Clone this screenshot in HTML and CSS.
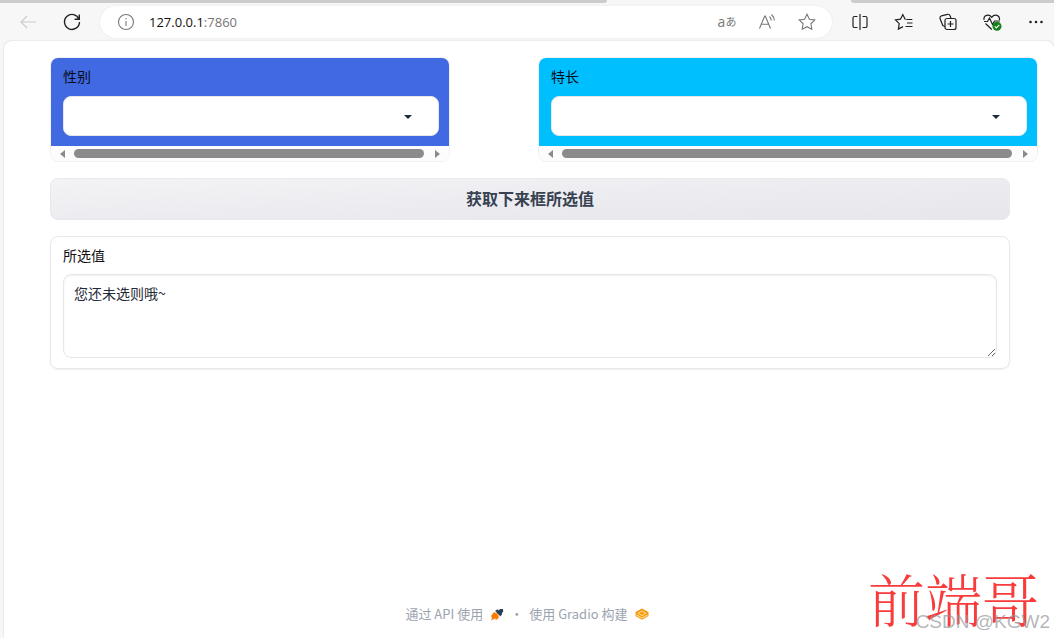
FILE: index.html
```html
<!DOCTYPE html>
<html lang="zh-CN">
<head>
<meta charset="utf-8">
<meta name="viewport" content="width=device-width, initial-scale=1">
<title>Gradio</title>
<link rel="stylesheet" href="styles.css">
</head>
<body>
<header class="browser">
  <div class="tabs"><div class="tab-left"></div><div class="tab-right"></div></div>
  <div class="toolbar">
    <button class="tool disabled" aria-label="后退"><svg viewBox="0 0 20 20"><path d="M18 10H3M9 4L3 10l6 6"/></svg></button>
    <button class="tool strong" aria-label="刷新"><svg viewBox="0 0 20 20"><path d="M17 7.200A7.500 7.500 0 1 0 17.500 10M17.300 2.500v4.700h-4.700"/></svg></button>
    <div class="address">
      <svg class="info" viewBox="0 0 20 20"><circle cx="10" cy="10" r="7.500"/><path d="M10 9v5M10 6v1.200"/></svg>
      <span class="url">127.0.0.1<span class="port">:7860</span></span>
      <button class="tool muted translate" aria-label="翻译">a<small>あ</small></button>
      <button class="tool muted" aria-label="大声朗读"><svg viewBox="0 0 20 20"><path d="M2.500 16.500L7.700 4h.600l5.200 12.500M4.300 12.300h7.400M12.500 4.500q1.600 1.500 1.700 4M14.500 2.500q2.800 2.500 2.800 6"/></svg></button>
      <button class="tool muted" aria-label="收藏此页"><svg viewBox="0 0 20 20"><path d="M10 2.300l2.400 4.900 5.400.8-3.900 3.800.9 5.400-4.800-2.500-4.800 2.500.9-5.400L2.200 8l5.400-.8z"/></svg></button>
    </div>
    <button class="tool" aria-label="拆分屏幕"><svg viewBox="0 0 20 20"><path d="M7.500 4.500h-3a1.500 1.500 0 0 0-1.500 1.500v8a1.500 1.500 0 0 0 1.500 1.500h3M12.500 4.500h3A1.500 1.500 0 0 1 17 6v8a1.500 1.500 0 0 1-1.500 1.500h-3M10 2v16"/></svg></button>
    <button class="tool" aria-label="收藏夹"><svg viewBox="0 0 20 20"><path d="M12.300 7.500h6M13 11h5.500M11.500 14.500h7M11.800 7.300L11 7 8.800 2.500 6.500 7.200l-5 .8 3.700 3.700-.8 5.400L9 14.600"/></svg></button>
    <button class="tool" aria-label="集锦"><svg viewBox="0 0 20 20"><rect x="7" y="6.500" width="11" height="11" rx="2"/><path d="M12.500 9v6M9.500 12h6M7 14.500L4.800 13.500 2 6.500Q1.600 4.500 3.500 3.800L9.500 2.300q2-.3 2.700 1.700l.8 2.500"/></svg></button>
    <button class="tool" aria-label="浏览器概要"><svg viewBox="0 0 20 20"><path d="M2 8C1.200 3 7 1.500 9.700 5.300 12.500 1.500 18 3 17.500 8M2 9.500h3.500L7.500 6l3 6.500 2-3.500h5.500M3.500 11.500l6.300 6"/><circle class="green" cx="15" cy="14.200" r="4.500"/><path class="check" d="M12.800 14.300l1.500 1.500 3-3"/></svg></button>
    <button class="tool dots" aria-label="设置及其他"><svg viewBox="0 0 20 20"><circle cx="4.500" cy="10" r="1.300"/><circle cx="10" cy="10" r="1.300"/><circle cx="15.500" cy="10" r="1.300"/></svg></button>
  </div>
</header>
<main class="page">
  <div class="row">
    <section class="card">
      <div class="field blue">
        <label for="gender">性别</label>
        <div class="picker"><select id="gender"><option></option></select><svg viewBox="0 0 18 18"><path d="M5 8h8l-4 4z"/></svg></div>
      </div>
      <div class="scroll"><i class="prev"></i><i class="thumb"></i><i class="next"></i></div>
    </section>
    <section class="card">
      <div class="field sky">
        <label for="skill">特长</label>
        <div class="picker"><select id="skill"><option></option></select><svg viewBox="0 0 18 18"><path d="M5 8h8l-4 4z"/></svg></div>
      </div>
      <div class="scroll"><i class="prev"></i><i class="thumb"></i><i class="next"></i></div>
    </section>
  </div>
  <button class="submit">获取下来框所选值</button>
  <section class="result">
    <label for="value">所选值</label>
    <textarea id="value">您还未选则哦~</textarea>
  </section>
  <footer class="footer">
    <a href="#api">通过 API 使用 <svg viewBox="0 0 14 14"><path class="navy" d="M6 5l4.500-3 2.500 0 .2 2.800-3.700 3.700-1 -1z"/><path class="navy" d="M5 4l2-1.500 2 .500-2.500 2zM10 9.500l2-2-.2-2-2.300 2z"/><path class="orange" d="M1 9l3-4 3 1.500L8.500 8.500 8.700 11 6 13l-.7-1.500L1 13.500 2 11z"/></svg></a>
    <span class="dot">·</span>
    <a href="#gradio">使用 Gradio 构建 <svg viewBox="0 0 14 14"><path class="amber" d="M7 1.500l6.500 3.500v4L7 12.800.5 9V5z"/><path class="hole" d="M3 6.300L7 4l4 2.300L7 8.500zM1.500 8L7 11l5.500-3"/></svg></a>
  </footer>
</main>
<div class="mark-red">前端哥</div>
<div class="mark-grey">CSDN @KGW2</div>
</body>
</html>
```
FILE: styles.css
```css
* { box-sizing: border-box; }
body {
  margin: 0;
  height: 100vh;
  display: flex;
  flex-direction: column;
  position: relative;
  overflow: hidden;
  background: #f7f7f7;
  font-family: "Noto Sans CJK SC", sans-serif;
  font-size: 14px;
  line-height: 20px;
  color: #1f2937;
}
button, select, textarea { font: inherit; color: inherit; }

.tabs { height: 3px; display: flex; justify-content: space-between; }
.tab-left, .tab-right { background: #cccccc; }
.tab-left { width: 57.6%; border-bottom-right-radius: 4px; }
.tab-right { width: 19.3%; border-bottom-left-radius: 4px; }
.toolbar {
  height: 38px;
  display: flex;
  align-items: center;
  gap: 12px;
  padding: 0 2px 1px 12px;
}
.tool {
  width: 32px;
  height: 32px;
  flex: none;
  display: flex;
  align-items: center;
  justify-content: center;
  padding: 0;
  border: 0;
  background: none;
  color: #222222;
}
.tool svg, .info {
  width: 20px;
  height: 20px;
  fill: none;
  stroke: currentColor;
  stroke-width: 1.2;
}
.tool.disabled { color: #cccccc; }
.tool.strong svg { stroke-width: 1.4; }
.tool.muted, .info { color: #777777; }
.tool.muted svg, .info { stroke-width: 1.1; }
.tool.dots svg { fill: currentColor; stroke: none; }
.tool .green { fill: #15801c; stroke: none; }
.tool .check { stroke: #ffffff; }
.translate { font-family: "Open Sans", "Noto Sans CJK JP", sans-serif; font-size: 14px; }
.translate small { font-size: 11px; }
.address {
  flex: 1;
  height: 32px;
  display: flex;
  align-items: center;
  gap: 8px;
  padding: 0 9px 0 16px;
  border-radius: 16px;
  background: #ffffff;
  box-shadow: 0 0 2px #e2e2e2;
}
.url {
  flex: 1;
  padding-left: 5px;
  font-family: "Open Sans", sans-serif;
  font-size: 13px;
  color: #111111;
}
.port { color: #757575; }

.page {
  flex: 1;
  display: flex;
  flex-direction: column;
  gap: 16px;
  margin-left: 4px;
  padding: 16px 44px 14px 46px;
  border-radius: 8px 8px 0 0;
  background: #ffffff;
  box-shadow: 0 0 2px #cccccc;
}
.row {
  display: grid;
  grid-template-columns: 4fr 5fr;
  column-gap: 88px;
  margin-right: -28px;
}
.card {
  border: 1px solid #f1f1f3;
  border-radius: 8px;
  overflow: hidden;
}
.field { padding: 8px 10px 10px 12px; color: #080c18; }
.blue { background: #4169e1; }
.sky { background: #00bfff; }
.field label { display: block; margin-bottom: 10px; }
.picker { display: grid; align-items: center; }
.picker select, .picker svg { grid-area: 1 / 1; }
.picker select {
  width: 100%;
  height: 40px;
  padding: 0 10px;
  appearance: none;
  border: 1px solid #e5e7eb;
  border-radius: 8px;
  background: #ffffff;
}
.picker svg {
  width: 18px;
  height: 18px;
  margin-right: 22px;
  justify-self: end;
  pointer-events: none;
  fill: #1f2937;
}
.scroll {
  height: 15px;
  display: flex;
  align-items: center;
  gap: 9px;
  padding: 0 9px;
  background: #fcfcfc;
}
.thumb { flex: 1; height: 9px; margin-right: 2px; border-radius: 5px; background: #8b8b8b; }
.prev, .next { border: 4px solid transparent; }
.prev { border-left: 0; border-right: 5px solid #8b8b8b; }
.next { border-right: 0; border-left: 5px solid #8b8b8b; }

.submit {
  height: 42px;
  padding: 0 6px 2px;
  border: 1px solid #e9e9ed;
  border-radius: 8px;
  background: linear-gradient(to bottom right, #f3f3f6, #e6e6eb);
  font-size: 16px;
  font-weight: 700;
  color: #374151;
}
.result {
  padding: 8px 12px 10px;
  border: 1px solid #e5e7eb;
  border-radius: 8px;
  box-shadow: 0 1px 2px #f0f0f0;
  color: #111111;
}
.result label { display: block; margin-bottom: 9px; }
.result textarea {
  display: block;
  width: 100%;
  height: 84px;
  padding: 8px 10px;
  border: 1px solid #e5e7eb;
  border-radius: 8px;
  box-shadow: inset 0 1px 2px #eeeeee;
  resize: vertical;
  color: #1f2937;
}
.footer {
  display: flex;
  justify-content: center;
  gap: 6px;
  margin-top: auto;
  padding-right: 6px;
  font-size: 13px;
  color: #9ca3af;
}
.footer a {
  display: flex;
  align-items: center;
  gap: 7px;
  color: inherit;
  text-decoration: none;
}
.footer svg { width: 14px; height: 14px; }
.navy { fill: #263e50; }
.orange { fill: #ff7c00; }
.amber { fill: #f99b0c; }
.hole { fill: none; stroke: #ffe0a0; }

.mark-red, .mark-grey { position: absolute; white-space: nowrap; pointer-events: none; }
.mark-red {
  right: 15px;
  bottom: 0;
  font-family: "SimSun", "Noto Serif CJK SC", "Noto Sans CJK SC", serif;
  font-size: 57px;
  font-weight: 300;
  line-height: 82px;
  color: #f83b3b;
}
.mark-grey {
  right: 4px;
  bottom: 4px;
  font-family: "Liberation Sans", sans-serif;
  font-size: 19px;
  line-height: 24px;
  color: rgba(150, 150, 155, 0.7);
}
```
